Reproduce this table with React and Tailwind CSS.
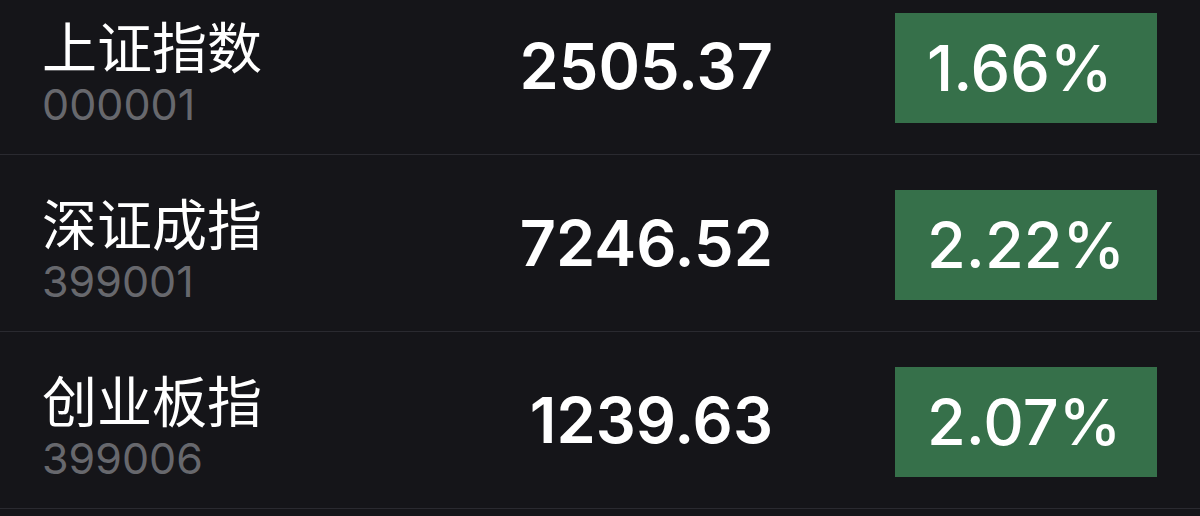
// App.jsx - market index list
const indices = [
  { name: "上证指数", code: "000001", price: "2505.37", change: "1.66%" },
  { name: "深证成指", code: "399001", price: "7246.52", change: "2.22%" },
  { name: "创业板指", code: "399006", price: "1239.63", change: "2.07%" },
];

function IndexRow({ item }) {
  return (
    <div className="flex items-center h-[177px] pl-[42px] pr-[43px] border-b border-[#2a2a30]">
      <div className="flex-1 flex flex-col pt-[10px]">
        <span
          className="text-[55px] leading-[58px] text-white"
          style={{ fontFamily: '"Noto Sans CJK SC", sans-serif' }}
        >
          {item.name}
        </span>
        <span className="mt-[8px] text-[43px] leading-[46px] text-[#67686d] font-['Inter',sans-serif]">
          {item.code}
        </span>
      </div>
      <div className="text-right text-[63px] leading-none font-semibold text-white font-['Inter',sans-serif]">
        {item.price}
      </div>
      <div className="ml-[122px] flex items-center w-[262px] h-[110px] mt-[4px] bg-[#36704a] pl-[32px]">
        <span className="text-[63px] leading-none font-medium text-white font-['Inter',sans-serif]">
          {item.change}
        </span>
      </div>
    </div>
  );
}

export default function App() {
  return (
    <div className="w-[1200px] h-[516px] overflow-hidden bg-[#151519]">
      <div className="-mt-[22px]">
        {indices.map((item) => (
          <IndexRow key={item.code} item={item} />
        ))}
      </div>
    </div>
  );
}
